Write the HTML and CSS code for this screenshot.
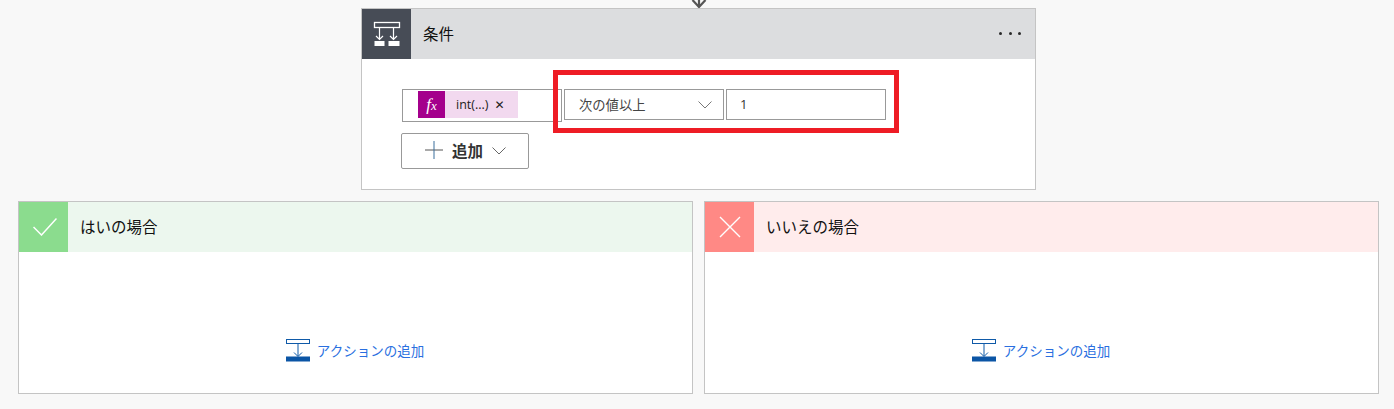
FILE: index.html
```html
<!DOCTYPE html>
<html lang="ja">
<head>
<meta charset="utf-8">
<title>条件</title>
<link rel="stylesheet" href="styles.css">
</head>
<body>
<div class="connector">
  <svg width="20" height="9" viewBox="0 0 20 9"><path d="M10 0v7M3.500 0 10 7l6.500-7" fill="none" stroke="#555" stroke-width="2.200"/></svg>
</div>
<section class="card condition">
  <header class="head head-cond">
    <div class="tile tile-cond">
      <svg class="cond-icon" width="28" height="28" viewBox="0 0 28 28" fill="none">
        <rect x="1.500" y="1.500" width="25" height="5" stroke="#fff" stroke-width="1.300"/>
        <path d="M6.500 7v11.500M20.500 7v11.500M3 15l3.500 3.500L10 15M17 15l3.500 3.500L24 15" stroke="#fff" stroke-width="1.200"/>
        <path d="M1.500 20h10v5h-10zM15.500 20h11v5h-11z" fill="#fff"/>
      </svg>
    </div>
    <div class="title">条件</div>
    <div class="dots"><i></i><i></i><i></i></div>
  </header>
  <div class="cond-body">
    <div class="row">
      <div class="field left-field">
        <span class="fx"><span class="fx-f">f</span><span class="fx-x">x</span></span><span class="token">int(...)<span class="token-x">✕</span></span>
      </div>
      <div class="field select"><span>次の値以上</span>
        <svg width="14" height="8" viewBox="0 0 14 8"><path d="M.5.500 7 7 13.500.5" fill="none" stroke="#777" stroke-width="1"/></svg>
      </div>
      <div class="field value">1</div>
    </div>
    <button class="add" type="button">
      <svg width="18" height="18" viewBox="0 0 18 18"><path d="M0 9h18" stroke="#555" stroke-width="1"/><path d="M9 0v18" stroke="#3b6f9c" stroke-width="1"/></svg>
      <span>追加</span>
      <svg width="14" height="8" viewBox="0 0 14 8"><path d="M.5.500 7 7 13.500.5" fill="none" stroke="#666" stroke-width="1"/></svg>
    </button>
    <div class="highlight"></div>
  </div>
</section>
<div class="branches">
  <section class="card branch">
    <header class="head head-yes">
      <div class="tile tile-yes">
        <svg class="check" width="24" height="18" viewBox="0 0 24 18"><path d="M.5 9 8.500 17 23.500.5" fill="none" stroke="#fff" stroke-width="1.500"/></svg>
      </div>
      <div class="title">はいの場合</div>
    </header>
    <div class="branch-body">
      <a class="add-action">
        <svg width="24" height="23" viewBox="0 0 24 23" fill="none"><rect x=".5" y=".5" width="23" height="4" stroke="#0f5aa8"/><path d="M12 5v12M8 13.500l4 4 4-4" stroke="#0f5aa8"/><rect y="17.500" width="24" height="5" fill="#0b55a5"/></svg>
        <span class="action-label">アクションの追加</span>
      </a>
    </div>
  </section>
  <section class="card branch">
    <header class="head head-no">
      <div class="tile tile-no">
        <svg width="22" height="22" viewBox="0 0 22 22"><path d="M1 1l20 20M21 1 1 21" fill="none" stroke="#fff" stroke-width="1.400"/></svg>
      </div>
      <div class="title">いいえの場合</div>
    </header>
    <div class="branch-body">
      <a class="add-action">
        <svg width="24" height="23" viewBox="0 0 24 23" fill="none"><rect x=".5" y=".5" width="23" height="4" stroke="#0f5aa8"/><path d="M12 5v12M8 13.500l4 4 4-4" stroke="#0f5aa8"/><rect y="17.500" width="24" height="5" fill="#0b55a5"/></svg>
        <span class="action-label">アクションの追加</span>
      </a>
    </div>
  </section>
</div>
</body>
</html>
```
FILE: styles.css
```css
* { box-sizing: border-box; }
html, body { height: 100%; }
body {
  margin: 0;
  background: #f8f8f8;
  font-family: "Noto Sans CJK JP", "Noto Sans", sans-serif;
  color: #111;
  overflow: hidden;
  display: flex;
  flex-direction: column;
}
.connector {
  height: 8px;
  display: flex;
  justify-content: center;
  padding-left: 4px;
  overflow: hidden;
}
.card {
  background: #fff;
  border: 1px solid #c4c4c4;
}
.condition {
  width: 675px;
  height: 182px;
  margin-left: 361px;
  display: flex;
  flex-direction: column;
}
.head {
  height: 50px;
  display: flex;
  align-items: center;
  flex: none;
}
.head-cond { background: #dcdddf; }
.head-yes { background: #ecf7ee; }
.head-no { background: #ffecec; }
.tile {
  width: 49px;
  height: 50px;
  display: flex;
  align-items: center;
  justify-content: center;
  flex: none;
}
.tile-cond { background: #474c56; }
.tile-yes { background: #8bdc8e; }
.tile-no { background: #ff8985; }
.cond-icon { margin-top: 2px; }
.check { margin-left: 3px; }
.title {
  margin: -2px 0 0 12px;
  font-size: 15.5px;
  line-height: 20px;
}
.dots {
  margin-left: auto;
  margin-right: 14px;
  margin-top: -1px;
  display: flex;
  gap: 6.500px;
}
.dots i {
  width: 3px;
  height: 3px;
  border-radius: 50%;
  background: #2a2a2a;
}
.cond-body {
  position: relative;
  flex: 1;
  padding: 30px 0 0 39px;
}
.row { display: flex; align-items: flex-start; }
.field {
  border: 1px solid #999;
  background: #fff;
  font-size: 13.300px;
  color: #333;
  display: flex;
  align-items: center;
}
.left-field {
  width: 160px;
  height: 33px;
  margin-left: 1px;
  padding: 0 0 2px 15px;
}
.fx {
  width: 27px;
  height: 27px;
  background: #a4008c;
  color: #fff;
  font-family: "Liberation Serif", serif;
  font-style: italic;
  display: flex;
  align-items: center;
  justify-content: center;
}
.fx-f { font-size: 17px; }
.fx-x { font-size: 13px; margin-top: 3px; }
.token {
  width: 73px;
  height: 27px;
  background: #f2d9ef;
  color: #222;
  display: flex;
  align-items: center;
  padding-left: 11px;
  font-family: "Open Sans", sans-serif;
  font-size: 12.500px;
}
.token-x { margin-left: 6px; font-size: 12px; font-family: "DejaVu Sans", sans-serif; }
.select {
  width: 160px;
  height: 31px;
  margin-left: 2px;
  padding: 0 11px 0 14px;
  justify-content: space-between;
  color: #444;
}
.value {
  width: 160px;
  height: 31px;
  margin-left: 2px;
  padding: 0 0 2px 13px;
  font-family: "Open Sans", sans-serif;
  font-size: 13px;
}
.add {
  margin-top: 11px;
  width: 128px;
  height: 36px;
  background: #fff;
  border: 1px solid #999;
  border-radius: 2px;
  display: flex;
  align-items: center;
  padding: 0 0 2px 23px;
  font-family: inherit;
  font-size: 15.500px;
  font-weight: 700;
  color: #333;
}
.add span { margin-left: 9px; }
.add svg:last-child { margin: 2px 0 0 9px; }
.highlight {
  position: absolute;
  left: 191px;
  top: 11px;
  width: 346px;
  height: 63px;
  border: 5px solid #ee1c25;
  pointer-events: none;
}
.branches {
  display: flex;
  gap: 11px;
  margin: 11px 15px 0 18px;
}
.branch {
  width: 675px;
  height: 193px;
  display: flex;
  flex-direction: column;
}
.branch-body {
  flex: 1;
  display: flex;
  align-items: flex-start;
  justify-content: center;
  padding-top: 87px;
}
.add-action {
  display: flex;
  align-items: center;
  gap: 7px;
  color: #2a6fe0;
  font-size: 13.500px;
}
.action-label { margin: -2px 1px 0 0; }
```
